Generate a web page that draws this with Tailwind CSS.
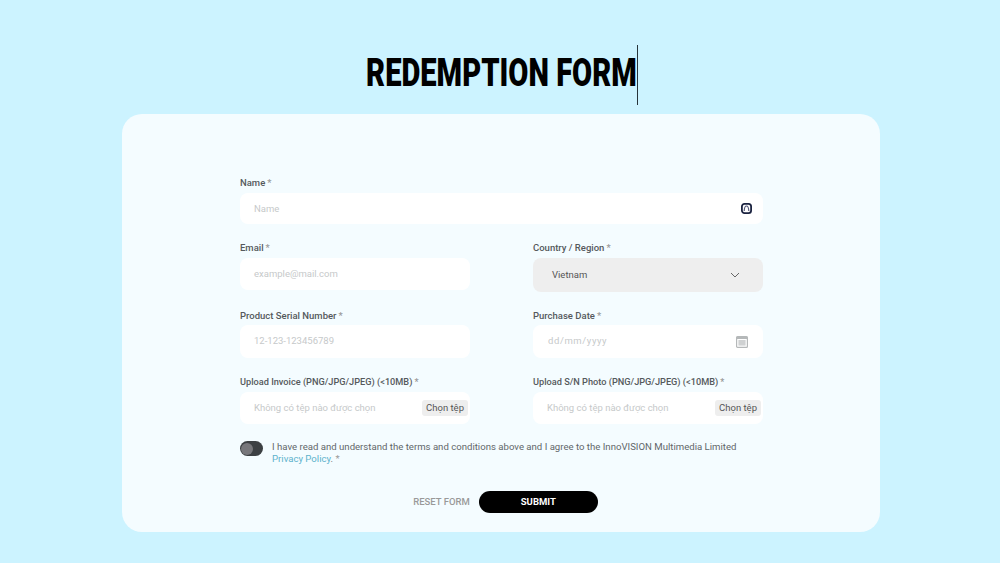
<!DOCTYPE html>
<html lang="en">
<head>
  <meta charset="UTF-8" />
  <meta name="viewport" content="width=device-width, initial-scale=1.0" />
  <title>Redemption Form</title>
  <script src="https://cdn.jsdelivr.net/npm/@tailwindcss/browser@4"></script>
</head>
<body class="bg-[#ccf3ff] w-[1000px] h-[563px] overflow-hidden font-['Roboto',sans-serif]">

  <!-- Title -->
  <div class="h-[114px] flex justify-center pt-[45px]">
    <div class="relative w-[272px] h-[60px] ml-[3px] flex justify-center">
      <h1 class="text-[38px] leading-[56px] font-black text-black whitespace-nowrap scale-x-[0.767] font-['Roboto',sans-serif]">REDEMPTION FORM</h1>
      <span class="absolute right-0 top-0 w-px h-[60px] bg-[#26343a]"></span>
    </div>
  </div>

  <!-- Card -->
  <div class="mx-[122px] w-[758px] h-[418px] bg-[#f4fcff] rounded-[20px] pt-[62px] px-[118px] text-[#5c6266]">
    <form class="w-[523px]">

      <label class="block text-[9.5px] leading-[13px] font-medium text-[#55595c] mb-[4px]">Name<span class="text-[#999] ml-[2px]">*</span></label>
      <div class="h-[31px] bg-white rounded-[8px] pl-[14px] pr-[10px] flex items-center justify-between">
        <span class="text-[9.5px] text-[#c6c9ca] pt-[1px]">Name</span>
        <svg class="w-[11px] h-[11px] mr-[1px]" viewBox="0 0 11 11"><rect x="0.9" y="0.9" width="9.2" height="9.2" rx="2.6" fill="none" stroke="#1b2340" stroke-width="1.8"/><path d="M3.2 8 Q3.4 3 5.5 3 Q7.6 3 7.8 8" fill="none" stroke="#55597a" stroke-width="1.2"/></svg>
      </div>

      <div class="grid grid-cols-2 gap-x-[63px] mt-[17px]">
        <div>
          <label class="block text-[9.5px] leading-[13px] font-medium text-[#55595c] mb-[4px]">Email<span class="text-[#999] ml-[2px]">*</span></label>
          <div class="h-[32px] bg-white rounded-[8px] pl-[14px] flex items-center">
            <span class="text-[9.5px] text-[#c6c9ca]">example@mail.com</span>
          </div>
        </div>
        <div>
          <label class="block text-[9.5px] leading-[13px] font-medium text-[#55595c] mb-[4px]">Country / Region<span class="text-[#999] ml-[2px]">*</span></label>
          <div class="h-[34px] bg-[#eeeeee] rounded-[8px] pl-[19px] pr-[23px] flex items-center justify-between">
            <span class="text-[9.5px] text-[#555]">Vietnam</span>
            <svg class="w-[10px] h-[6px]" viewBox="0 0 10 6"><path d="M1 1 L5 5 L9 1" fill="none" stroke="#666" stroke-width="1"/></svg>
          </div>
        </div>
      </div>

      <div class="grid grid-cols-2 gap-x-[63px] mt-[17px]">
        <div>
          <label class="block text-[9.5px] leading-[13px] font-medium text-[#55595c] mb-[3px]">Product Serial Number<span class="text-[#999] ml-[2px]">*</span></label>
          <div class="h-[33px] bg-white rounded-[8px] pl-[14px] flex items-center">
            <span class="text-[9.5px] text-[#c6c9ca]">12-123-123456789</span>
          </div>
        </div>
        <div>
          <label class="block text-[9.5px] leading-[13px] font-medium text-[#55595c] mb-[3px]">Purchase Date<span class="text-[#999] ml-[2px]">*</span></label>
          <div class="h-[33px] bg-white rounded-[8px] pl-[15px] pr-[15px] flex items-center justify-between">
            <span class="text-[9.5px] tracking-[0.6px] text-[#c6c9ca]">dd/mm/yyyy</span>
            <svg class="w-[12px] h-[12px]" viewBox="0 0 12 12"><rect x="0.6" y="0.6" width="10.8" height="10.8" rx="1" fill="none" stroke="#b5b8b9" stroke-width="1.2"/><rect x="2.4" y="4" width="7.2" height="5.6" fill="#cfd1d2"/><rect x="0.6" y="0.6" width="10.8" height="2.4" fill="#b5b8b9"/></svg>
          </div>
        </div>
      </div>

      <div class="grid grid-cols-2 gap-x-[63px] mt-[17px]">
        <div>
          <label class="block text-[9.2px] leading-[13px] font-medium text-[#55595c] mb-[4px]">Upload Invoice (PNG/JPG/JPEG) (&lt;10MB)<span class="text-[#999] ml-[2px]">*</span></label>
          <div class="h-[32px] bg-white rounded-[8px] pl-[14px] pr-[2px] flex items-center justify-between">
            <span class="text-[9.5px] text-[#c6c9ca]">Không có tệp nào được chọn</span>
            <span class="text-[9.5px] leading-[16px] px-[4px] bg-[#eeeeee] rounded-[3px] text-[#555]">Chọn tệp</span>
          </div>
        </div>
        <div>
          <label class="block text-[9.2px] leading-[13px] font-medium text-[#55595c] mb-[4px]">Upload S/N Photo (PNG/JPG/JPEG) (&lt;10MB)<span class="text-[#999] ml-[2px]">*</span></label>
          <div class="h-[32px] bg-white rounded-[8px] pl-[14px] pr-[2px] flex items-center justify-between">
            <span class="text-[9.5px] text-[#c6c9ca]">Không có tệp nào được chọn</span>
            <span class="text-[9.5px] leading-[16px] px-[4px] bg-[#eeeeee] rounded-[3px] text-[#555]">Chọn tệp</span>
          </div>
        </div>
      </div>

      <!-- Consent -->
      <div class="flex mt-[17px] gap-[9px]">
        <div class="w-[23px] h-[15px] rounded-full bg-[#3c4043] flex items-center pl-[1px] shrink-0">
          <span class="w-[12px] h-[12px] rounded-full bg-[#77777b]"></span>
        </div>
        <p class="text-[9.6px] leading-[12px] text-[#62676a] whitespace-nowrap">I have read and understand the terms and conditions above and I agree to the InnoVISION Multimedia Limited<br><span class="text-[#5cb2cc]">Privacy Policy</span>. <span class="text-[#999]">*</span></p>
      </div>

      <!-- Actions -->
      <div class="flex items-center justify-center gap-[9px] mt-[26px] ml-[8px]">
        <span class="text-[9.5px] font-medium text-[#999]">RESET FORM</span>
        <button type="button" class="w-[119px] h-[22px] rounded-full bg-black text-white text-[9.5px] font-bold">SUBMIT</button>
      </div>
    </form>
  </div>

</body>
</html>
